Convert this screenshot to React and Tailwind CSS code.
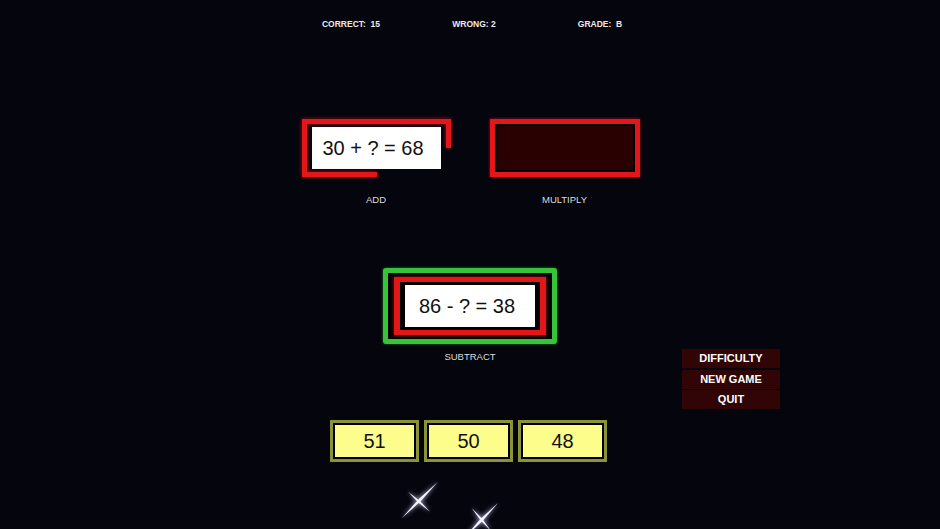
import React from 'react';

const FONT = { fontFamily: '"Liberation Sans", Arial, sans-serif' };

// tapered diamond ray from (x1,y1) to (x2,y2), widest in the middle
const Ray = ({ x1, y1, x2, y2, w }) => {
  const cx = (x1 + x2) / 2;
  const cy = (y1 + y2) / 2;
  const len = Math.hypot(x2 - x1, y2 - y1);
  const nx = (-(y2 - y1) / len) * w;
  const ny = ((x2 - x1) / len) * w;
  const pts = `${x1},${y1} ${cx + nx},${cy + ny} ${x2},${y2} ${cx - nx},${cy - ny}`;
  return <polygon points={pts} />;
};

const Sparkles = () => (
  <svg width="110" height="51" viewBox="0 0 110 51" className="absolute left-[395px] top-[478px]">
    <defs>
      <filter id="glow" x="-50%" y="-50%" width="200%" height="200%">
        <feGaussianBlur stdDeviation="2" />
      </filter>
    </defs>
    <g fill="#c8ccff" opacity="0.6" filter="url(#glow)">
      <Ray x1={6.7} y1={40.3} x2={43} y2={3.7} w={3} />
      <Ray x1={13} y1={13.7} x2={35} y2={33.7} w={2.6} />
      <Ray x1={70} y1={59} x2={103} y2={25} w={3} />
      <Ray x1={76.7} y1={30} x2={96} y2={53} w={2.6} />
    </g>
    <g fill="#f4f4ff">
      <Ray x1={6.7} y1={40.3} x2={43} y2={3.7} w={1.5} />
      <Ray x1={13} y1={13.7} x2={35} y2={33.7} w={1.2} />
      <Ray x1={70} y1={59} x2={103} y2={25} w={1.5} />
      <Ray x1={76.7} y1={30} x2={96} y2={53} w={1.2} />
    </g>
  </svg>
);

const Label = ({ children }) => (
  <div className="text-[9.5px] leading-[12px] text-[#dcdcdc] text-center">{children}</div>
);

const Equation = ({ text, w, h }) => (
  <div className={`bg-white flex items-center justify-center pr-[6px] text-[20px] text-[#111] ${w} ${h}`}>
    {text}
  </div>
);

// add card: the red outline is a countdown stroke, drawn partially
const AddCard = () => (
  <div className="relative w-[149px] h-[58px] px-[10px] py-[8px]">
    <svg width="149" height="58" className="absolute left-0 top-0 drop-shadow-[0_0_2px_rgba(255,30,30,0.6)]">
      <path
        d="M75 55.5 L2.5 55.5 L2.5 2.5 L146.5 2.5 L146.5 29"
        fill="none"
        stroke="#e3161a"
        strokeWidth="5"
        strokeLinejoin="miter"
      />
    </svg>
    <Equation text="30 + ? = 68" w="w-[129px]" h="h-[42px]" />
  </div>
);

const MultiplyCard = () => (
  <div className="w-[150px] h-[58px] border-[5px] border-[#e3161a] bg-black p-[2px] shadow-[0_0_3px_rgba(255,30,30,0.6)]">
    <div className="w-full h-full bg-[#290101]" />
  </div>
);

const SubtractCard = () => (
  <div className="w-[174px] h-[76px] border-[5px] border-[#36c43a] rounded-[3px] bg-black pt-[4px] px-[6px] shadow-[0_0_3px_rgba(60,220,60,0.5)]">
    <div className="w-[152px] h-[58px] border-[5px] border-x-[6px] border-[#e3161a] bg-black px-[5px] py-[3px] shadow-[0_0_4px_rgba(255,30,30,0.6)]">
      <Equation text="86 - ? = 38" w="w-[130px]" h="h-[42px]" />
    </div>
  </div>
);

const answers = [51, 50, 48];
const menu = ['DIFFICULTY', 'NEW GAME', 'QUIT'];

export default function App() {
  return (
    <div className="relative w-[940px] h-[529px] overflow-hidden bg-[#05050d] text-white" style={FONT}>
      {/* score line */}
      <div className="flex pt-[19px] pl-[291px] text-[8.5px] leading-[10px] font-bold text-[#ececec]">
        <div className="w-[120px] text-center">CORRECT:&nbsp; 15</div>
        <div className="w-[120px] ml-[3px] text-center">WRONG: 2</div>
        <div className="w-[120px] ml-[6px] text-center">GRADE:&nbsp; B</div>
      </div>

      {/* operation cards */}
      <div className="flex justify-center gap-[39px] mt-[90px] pl-[1px]">
        <div className="flex flex-col items-center">
          <AddCard />
          <div className="mt-[17px]"><Label>ADD</Label></div>
        </div>
        <div className="flex flex-col items-center">
          <MultiplyCard />
          <div className="mt-[17px]"><Label>MULTIPLY</Label></div>
        </div>
      </div>

      <div className="grid grid-cols-[1fr_280px_1fr] mt-[62px]">
        <div />
        <div className="flex flex-col items-center">
          <SubtractCard />
          <div className="mt-[7px]"><Label>SUBTRACT</Label></div>

          {/* answer choices */}
          <div className="flex gap-[5px] mt-[57px] pr-[3px]">
            {answers.map((n) => (
              <div key={n} className="w-[89px] h-[42px] border-[3px] border-[#8c9236] bg-black p-[2px]">
                <div className="w-full h-full bg-[#fdfd8c] flex items-center justify-center text-[20px] text-[#111]">
                  {n}
                </div>
              </div>
            ))}
          </div>
        </div>

        {/* side menu */}
        <div className="ml-[72px] mt-[81px] flex flex-col gap-[1.5px]">
          {menu.map((m) => (
            <div
              key={m}
              className="w-[98px] h-[19px] bg-[#310506] flex items-center justify-center text-[11px] font-bold text-white"
            >
              {m}
            </div>
          ))}
        </div>
      </div>

      <Sparkles />
    </div>
  );
}
